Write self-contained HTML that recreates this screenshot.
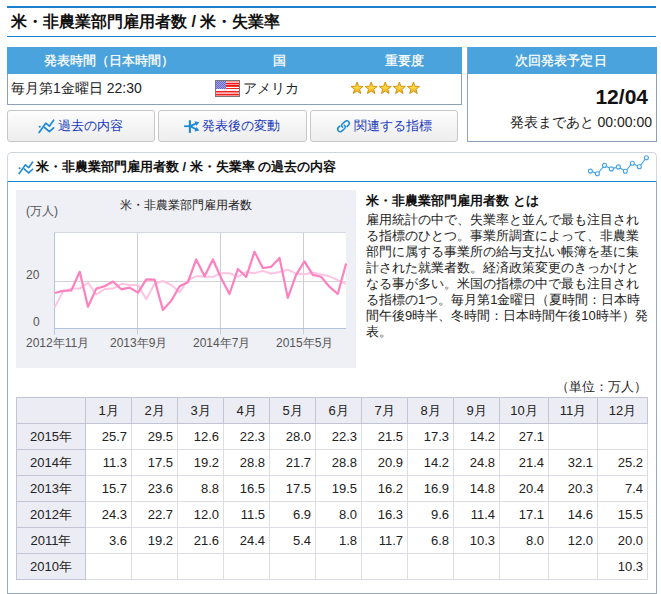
<!DOCTYPE html>
<html lang="ja">
<head>
<meta charset="utf-8">
<title>米・非農業部門雇用者数 / 米・失業率</title>
<style>
html,body{margin:0;padding:0;background:#fff;}
body{width:661px;height:594px;position:relative;overflow:hidden;font-family:"Liberation Sans",sans-serif;color:#222;font-size:13px;line-height:16px;}
.abs{position:absolute;white-space:nowrap;}
#ttl{left:7px;top:6px;width:649px;height:28px;border-top:2px solid #1a80d0;border-bottom:1px solid #1a80d0;box-sizing:content-box;}
#ttl h1{margin:0;position:absolute;left:4px;top:2px;font-size:16px;line-height:24px;font-weight:bold;color:#111;white-space:nowrap;}
.bluehd{background:#4aa3dc;color:#fff;-webkit-text-stroke:.3px #fff;font-size:13px;line-height:27px;height:27px;text-align:center;}
#info{left:7px;top:47px;width:455px;height:58px;box-sizing:border-box;border:1px solid #8d9fbb;border-top:none;background:#fff;}
#info .bluehd{position:absolute;left:-1px;top:0;width:455px;}
#next{left:467px;top:47px;width:190px;height:95px;box-sizing:border-box;border:1px solid #8d9fbb;border-top:none;background:#fff;}
#next .bluehd{position:absolute;left:-1px;top:0;width:190px;box-sizing:border-box;border-left:1px solid #8f9fbb;padding-right:3px;}
.btn{position:absolute;top:110px;height:32px;box-sizing:border-box;border:1px solid #c7c7c7;border-radius:3px;background:linear-gradient(#fdfdfd,#ededed);color:#1638bc;font-size:13px;line-height:30px;white-space:nowrap;}
.btn span{position:absolute;top:0;}
.btn svg{position:absolute;}
#panel{left:7px;top:181px;width:650px;height:413px;box-sizing:border-box;border:1px solid #97a9c5;border-top:none;background:#fff;}
#phead{position:absolute;left:7px;top:152px;width:650px;height:30px;box-sizing:border-box;border:1px solid #cfd5dc;border-bottom:1px solid #1a80d0;border-radius:5px 5px 0 0;background:#fff;}
#phead h2{margin:0;position:absolute;left:28px;top:6px;font-size:13px;line-height:16px;font-weight:bold;color:#111;white-space:nowrap;}
#chart{left:16px;top:190px;width:340px;height:178px;background:#eef0f6;}
#chart .lb{position:absolute;font-size:12px;line-height:14px;color:#555;white-space:nowrap;}
#desc{left:366px;top:193px;}
#desc h3{margin:0 0 3px 0;font-size:13px;line-height:16px;font-weight:bold;color:#111;}
#desc p{margin:0;font-size:13px;line-height:16px;color:#222;}
#desc p span{display:block;}
#unit{right:14px;top:379px;font-size:13px;line-height:16px;color:#222;}
table#dt{position:absolute;left:16px;top:397px;border-collapse:collapse;table-layout:fixed;width:631px;font-size:13px;color:#222;}
#dt td,#dt th{border:1px solid #dcdde5;height:26px;padding:0 4px 0 0;box-sizing:border-box;text-align:right;font-weight:normal;line-height:16px;white-space:nowrap;overflow:hidden;}
#dt th{background:#ecedf4;text-align:center;padding:0;border-color:#c1c5d5;}
#j1,#j2,#j3,#j4,#j5,#j6,#j7,#j8,#j9,#j10,#j11,#j12,#j13,#j14,#j15,#j16,#j17,#j18,#j19,#j20,#j21,#j22{white-space:nowrap;text-align:justify;text-align-last:justify;text-justify:inter-character;}
#j1{width:269.37px}#j2{width:130.02px}#j3{width:39.02px}#j4{width:130.74px}#j5{width:56.02px}#j6{width:91.02px}#j7{width:142.42px}#j8{width:65.02px}#j9{width:78.02px}#j10{width:78.02px}#j11{width:300.48px}#j12{width:132.02px}#j13{width:172.65px}#j14{width:273.02px}#j15{width:273.02px}#j16{width:273.02px}#j17{width:273.02px}#j18{width:273.02px}#j19{width:274.49px}#j20{width:281.73px}#j21{width:26.02px}#j22{width:91.02px}
</style>
</head>
<body>
<div id="ttl" class="abs"><h1 id="j1">米・非農業部門雇用者数 / 米・失業率</h1></div>

<div id="info" class="abs">
  <div class="bluehd">&nbsp;</div>
  <div class="abs" style="left:36px;top:0;line-height:27px;color:#fff;-webkit-text-stroke:.3px #fff;" id="j2">発表時間（日本時間）</div>
  <div class="abs" style="left:265px;top:0;line-height:27px;color:#fff;-webkit-text-stroke:.3px #fff;">国</div>
  <div class="abs" style="left:377px;top:0;line-height:27px;color:#fff;-webkit-text-stroke:.3px #fff;" id="j3">重要度</div>
  <div class="abs" style="left:3px;top:31px;font-size:14px;line-height:20px;" id="j4">毎月第1金曜日 22:30</div>
  <svg class="abs" style="left:207px;top:33px" width="25" height="17" viewBox="0 0 25 17" shape-rendering="crispEdges"><rect width="25" height="17" fill="#787878"/><rect x="1" y="1" width="23" height="1" fill="#ff9a9a"/><rect x="1" y="2" width="23" height="1" fill="#ffb4b4"/><rect x="1" y="3" width="23" height="1" fill="#f42020"/><rect x="1" y="4" width="23" height="1" fill="#ff9494"/><rect x="1" y="5" width="23" height="1" fill="#f41818"/><rect x="1" y="6" width="23" height="1" fill="#f63030"/><rect x="1" y="7" width="23" height="1" fill="#ffffff"/><rect x="1" y="8" width="23" height="1" fill="#f42020"/><rect x="1" y="9" width="23" height="1" fill="#ffffff"/><rect x="1" y="10" width="23" height="1" fill="#fff0f0"/><rect x="1" y="11" width="23" height="1" fill="#f42020"/><rect x="1" y="12" width="23" height="1" fill="#ff8c8c"/><rect x="1" y="13" width="23" height="1" fill="#ffb4b4"/><rect x="1" y="14" width="23" height="1" fill="#f42020"/><rect x="1" y="15" width="23" height="1" fill="#ff8888"/><rect x="1" y="1" width="10" height="8" fill="#6666c8"/><g fill="#a4a4e2"><rect x="1" y="1" width="1" height="1"/><rect x="3" y="1" width="1" height="1"/><rect x="5" y="1" width="1" height="1"/><rect x="7" y="1" width="1" height="1"/><rect x="9" y="1" width="1" height="1"/><rect x="2" y="2" width="1" height="1"/><rect x="4" y="2" width="1" height="1"/><rect x="6" y="2" width="1" height="1"/><rect x="8" y="2" width="1" height="1"/><rect x="10" y="2" width="1" height="1"/><rect x="1" y="3" width="1" height="1"/><rect x="3" y="3" width="1" height="1"/><rect x="5" y="3" width="1" height="1"/><rect x="7" y="3" width="1" height="1"/><rect x="9" y="3" width="1" height="1"/><rect x="2" y="4" width="1" height="1"/><rect x="4" y="4" width="1" height="1"/><rect x="6" y="4" width="1" height="1"/><rect x="8" y="4" width="1" height="1"/><rect x="10" y="4" width="1" height="1"/><rect x="1" y="5" width="1" height="1"/><rect x="3" y="5" width="1" height="1"/><rect x="5" y="5" width="1" height="1"/><rect x="7" y="5" width="1" height="1"/><rect x="9" y="5" width="1" height="1"/><rect x="2" y="6" width="1" height="1"/><rect x="4" y="6" width="1" height="1"/><rect x="6" y="6" width="1" height="1"/><rect x="8" y="6" width="1" height="1"/><rect x="10" y="6" width="1" height="1"/><rect x="1" y="7" width="1" height="1"/><rect x="3" y="7" width="1" height="1"/><rect x="5" y="7" width="1" height="1"/><rect x="7" y="7" width="1" height="1"/><rect x="9" y="7" width="1" height="1"/><rect x="2" y="8" width="1" height="1"/><rect x="4" y="8" width="1" height="1"/><rect x="6" y="8" width="1" height="1"/><rect x="8" y="8" width="1" height="1"/><rect x="10" y="8" width="1" height="1"/></g></svg>
  <div class="abs" style="left:235px;top:31px;font-size:14px;line-height:20px;" id="j5">アメリカ</div>
  <svg class="abs" style="left:342px;top:33px" width="72" height="16" viewBox="0 0 72 16"><defs><path id="st" d="M0.00 -6.35 L1.59 -2.18 L6.04 -1.96 L2.57 0.83 L3.73 5.14 L0.00 2.70 L-3.73 5.14 L-2.57 0.83 L-6.04 -1.96 L-1.59 -2.18 Z"/><linearGradient id="sg" x1="0" y1="0" x2="0" y2="1"><stop offset="0" stop-color="#f4b820"/><stop offset=".45" stop-color="#fbd840"/><stop offset="1" stop-color="#eda815"/></linearGradient></defs><g fill="url(#sg)" stroke="#d08c0c" stroke-width=".9" stroke-linejoin="miter"><use href="#st" x="7.05" y="8.4"/><use href="#st" x="21.15" y="8.4"/><use href="#st" x="35.25" y="8.4"/><use href="#st" x="49.35" y="8.4"/><use href="#st" x="63.45" y="8.4"/></g></svg>
</div>

<div id="next" class="abs">
  <div class="bluehd"><span id="j6" style="display:inline-block">次回発表予定日</span></div>
  <div class="abs" style="right:8px;top:38px;font-size:21px;line-height:24px;font-weight:bold;color:#111;">12/04</div>
  <div class="abs" style="right:4px;top:65px;font-size:14px;line-height:20px;" id="j7">発表まであと 00:00:00</div>
</div>

<div class="btn" style="left:7px;width:148px;">
  <svg style="left:29px;top:7px" width="18" height="16" viewBox="0 0 18 16"><g fill="none" stroke="#1e8ad6" stroke-width="1.7" stroke-linecap="round" stroke-linejoin="round"><path d="M2.1 14.6 L8.8 5.2 L12.4 8.2 L16.6 2.2"/><path d="M7.5 9.5 L12.4 13.7 L16.6 9.9"/></g><circle cx="2.7" cy="8.7" r="1.05" fill="#1e8ad6"/></svg>
  <span style="left:50px;" id="j8">過去の内容</span>
</div>
<div class="btn" style="left:158px;width:149px;">
  <svg style="left:24px;top:8px" width="18" height="16" viewBox="0 0 18 16"><g fill="none" stroke="#1e8ad6" stroke-linecap="butt"><path d="M1.1 7.2 H7" stroke-width="1.8"/><path d="M6.9 1.2 V13.9" stroke-width="2.1"/><path d="M7 7.2 L13.6 4.3 M7 7.2 L13.6 10.5" stroke-width="1.9"/></g><path d="M16.3 3.3 L11.4 2.2 L13.4 6.8 Z M16.3 11.5 L13.4 8 L11.4 12.6 Z" fill="#1e8ad6"/></svg>
  <span style="left:43px;" id="j9">発表後の変動</span>
</div>
<div class="btn" style="left:310px;width:148px;">
  <svg style="left:23px;top:6px" width="20" height="20" viewBox="0 0 20 20"><g transform="translate(9.5 9.25) scale(.92) translate(-9.5 -9.25)" fill="none" stroke="#1e8ad6" stroke-width="1.65" stroke-linecap="round" stroke-linejoin="round"><path d="M8.6 10.3 C7.2 9 7 8 8.2 6.8 L11 4.2 C12.3 3 14 3 15 4.2 C16.2 5.5 16.2 6.8 15 8 L13.5 9.4"/><path d="M10.4 8.2 C11.8 9.5 12 10.5 10.8 11.7 L8 14.3 C6.7 15.5 5 15.5 4 14.3 C2.8 13 2.8 11.7 4 10.5 L5.5 9.1"/></g></svg>
  <span style="left:43px;" id="j10">関連する指標</span>
</div>

<div id="panel" class="abs"></div>
<div id="phead">
    <svg style="position:absolute;left:9px;top:7px" width="17" height="15" viewBox="0 0 18 16"><g fill="none" stroke="#1e8ad6" stroke-width="1.7" stroke-linecap="round" stroke-linejoin="round"><path d="M2.1 14.6 L8.8 5.2 L12.4 8.2 L16.6 2.2"/><path d="M7.5 9.5 L12.4 13.7 L16.6 9.9"/></g><circle cx="2.7" cy="8.7" r="1.05" fill="#1e8ad6"/></svg>
    <h2 id="j11">米・非農業部門雇用者数 / 米・失業率 の過去の内容</h2>
    <svg style="position:absolute;left:0;top:0" width="648" height="28" viewBox="0 0 648 28"><path d="M582.4 18.1 L589.4 20.8 L596.5 12.4 L603.4 15.9 L610.4 13.9 L617.3 18.3 L624.3 10.2 L631.3 13.8 L638.4 4.7" fill="none" stroke="#44a4ee" stroke-width="1.1"/><g fill="#fff" stroke="#44a4ee" stroke-width="1.1"><circle cx="582.4" cy="18.1" r="2"/><circle cx="589.4" cy="20.8" r="2"/><circle cx="596.5" cy="12.4" r="2"/><circle cx="603.4" cy="15.9" r="2"/><circle cx="610.4" cy="13.9" r="2"/><circle cx="617.3" cy="18.3" r="2"/><circle cx="624.3" cy="10.2" r="2"/><circle cx="631.3" cy="13.8" r="2"/><circle cx="638.4" cy="4.7" r="2"/></g></svg>
  </div>

<div id="chart" class="abs">
  <div class="lb" style="left:10px;top:14px;">(万人)</div>
  <div class="lb" style="left:104px;top:8px;color:#222;" id="j12">米・非農業部門雇用者数</div>
  <div class="lb" style="left:10px;top:78px;">20</div>
  <div class="lb" style="left:17px;top:125px;">0</div>
  <div class="lb" style="left:10px;top:146px;">2012年11月</div>
  <div class="lb" style="left:94px;top:146px;">2013年9月</div>
  <div class="lb" style="left:177px;top:146px;">2014年7月</div>
  <div class="lb" style="left:260px;top:146px;">2015年5月</div>
  <svg style="position:absolute;left:0;top:0" width="340" height="178" viewBox="16 190 340 178">
    <rect x="54.5" y="232.5" width="291.5" height="96" fill="#fff"/>
    <g stroke="#c9cdd4" stroke-width="1" fill="none">
      <path d="M54.5 232.5 H346" stroke="#d3d8e0"/>
      <path d="M54.5 281.5 H346" stroke="#d2d2d2"/>
      <path d="M137.5 232.5 V334.5 M220.5 232.5 V334.5 M303.5 232.5 V334.5"/>
    </g>
    <g stroke="#b4c4da" stroke-width="1" fill="none">
      <path d="M54.5 232.5 V334.5"/>
      <path d="M54.5 328.5 H346"/>
    </g>
    <polyline id="l2" fill="none" stroke="#ffc4e2" stroke-width="2" stroke-linejoin="round" points="54.7,307.4 63.0,291.6 71.4,288.6 79.7,288.6 88.0,282.7 96.3,294.5 104.7,289.0 113.0,288.6 121.3,283.8 129.6,285.0 138.0,285.0 146.3,299.2 154.6,283.8 162.9,281.0 171.3,285.0 179.6,292.3 187.9,280.3 196.2,276.1 204.6,276.8 212.9,276.8 221.2,273.2 229.5,273.2 237.9,276.8 246.2,272.0 254.5,273.2 262.8,270.9 271.2,273.7 279.5,272.0 287.8,269.7 296.1,273.7 304.5,274.2 312.8,272.5 321.1,274.4 329.4,276.3 337.8,280.1 346.1,283.8"/>
    <polyline id="l1" fill="none" stroke="#ff80bf" stroke-width="2.2" stroke-linejoin="round" points="54.7,293.0 63.0,290.9 71.4,290.4 79.7,271.8 88.0,306.7 96.3,288.6 104.7,286.2 113.0,281.5 121.3,289.3 129.6,287.6 138.0,292.6 146.3,279.4 154.6,279.6 162.9,310.0 171.3,300.8 179.6,286.2 187.9,282.2 196.2,259.5 204.6,276.3 212.9,259.5 221.2,278.2 229.5,294.0 237.9,269.0 246.2,277.0 254.5,251.7 262.8,268.0 271.2,266.8 279.5,257.9 287.8,297.8 296.1,274.9 304.5,261.4 312.8,274.9 321.1,276.8 329.4,286.7 337.8,294.0 346.1,263.5"/>
  </svg>
</div>

<div id="desc" class="abs">
  <h3 id="j13">米・非農業部門雇用者数 とは</h3>
  <p><span id="j14">雇用統計の中で、失業率と並んで最も注目され</span><span id="j15">る指標のひとつ。事業所調査によって、非農業</span><span id="j16">部門に属する事業所の給与支払い帳簿を基に集</span><span id="j17">計された就業者数。経済政策変更のきっかけと</span><span id="j18">なる事が多い。米国の指標の中で最も注目され</span><span id="j19">る指標の1つ。毎月第1金曜日（夏時間：日本時</span><span id="j20">間午後9時半、冬時間：日本時間午後10時半）発</span><span id="j21">表。</span></p>
</div>

<div id="unit" class="abs"><span id="j22" style="display:block">（単位：万人）</span></div>

<table id="dt">
<colgroup><col style="width:69px"><col style="width:46px"><col style="width:46px"><col style="width:46px"><col style="width:46px"><col style="width:46px"><col style="width:46px"><col style="width:46px"><col style="width:46px"><col style="width:46px"><col style="width:49px"><col style="width:49px"><col style="width:50px"></colgroup>
<tr style="height:26px"><th></th><th>1月</th><th>2月</th><th>3月</th><th>4月</th><th>5月</th><th>6月</th><th>7月</th><th>8月</th><th>9月</th><th>10月</th><th>11月</th><th>12月</th></tr>
<tr><th>2015年</th><td>25.7</td><td>29.5</td><td>12.6</td><td>22.3</td><td>28.0</td><td>22.3</td><td>21.5</td><td>17.3</td><td>14.2</td><td>27.1</td><td></td><td></td></tr>
<tr><th>2014年</th><td>11.3</td><td>17.5</td><td>19.2</td><td>28.8</td><td>21.7</td><td>28.8</td><td>20.9</td><td>14.2</td><td>24.8</td><td>21.4</td><td>32.1</td><td>25.2</td></tr>
<tr><th>2013年</th><td>15.7</td><td>23.6</td><td>8.8</td><td>16.5</td><td>17.5</td><td>19.5</td><td>16.2</td><td>16.9</td><td>14.8</td><td>20.4</td><td>20.3</td><td>7.4</td></tr>
<tr><th>2012年</th><td>24.3</td><td>22.7</td><td>12.0</td><td>11.5</td><td>6.9</td><td>8.0</td><td>16.3</td><td>9.6</td><td>11.4</td><td>17.1</td><td>14.6</td><td>15.5</td></tr>
<tr><th>2011年</th><td>3.6</td><td>19.2</td><td>21.6</td><td>24.4</td><td>5.4</td><td>1.8</td><td>11.7</td><td>6.8</td><td>10.3</td><td>8.0</td><td>12.0</td><td>20.0</td></tr>
<tr><th>2010年</th><td></td><td></td><td></td><td></td><td></td><td></td><td></td><td></td><td></td><td></td><td></td><td>10.3</td></tr>
</table>
</body>
</html>
